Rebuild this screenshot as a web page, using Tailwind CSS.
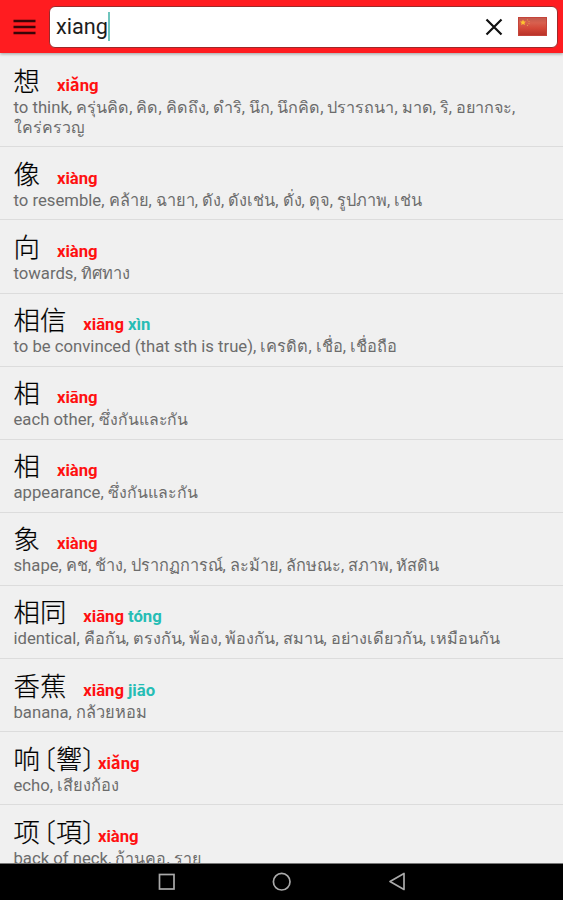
<!DOCTYPE html>
<html lang="en">
<head>
<meta charset="utf-8">
<title>Dictionary</title>
<script src="https://cdn.jsdelivr.net/npm/@tailwindcss/browser@4"></script>
</head>
<body class="bg-black">
<div class="flex h-[900px] w-[563px] flex-col overflow-hidden bg-[#f0f0f0] font-[Roboto,'Noto_Sans_CJK_SC','Noto_Sans',sans-serif]">
  <header class="relative z-10 flex h-[53px] shrink-0 items-center bg-[#ff1c20] pl-[13px] pr-[5px] shadow-[0_1px_3px_rgba(0,0,0,0.35)]">
    <svg class="h-[16px] w-[23px] shrink-0" viewBox="0 0 23 16" stroke="#3a0508" stroke-width="2.4"><path d="M0.5 2H22.500M0.500 8H22.500M0.500 14H22.500"/></svg>
    <div class="ml-[13px] flex h-[42px] flex-1 items-center rounded-[6px] border border-[#9c2a2a] bg-white pl-[6px] pr-[10px]">
      <span class="pt-[1px] text-[21.700px] leading-[30px] text-[#1d1d1d]">xiang</span>
      <span class="h-[29px] w-[2px] bg-[#6fc5bd]"></span>
      <svg class="ml-auto h-[18px] w-[18px]" viewBox="0 0 18 18" stroke="#111" stroke-width="2.200" fill="none"><path d="M1.500 1.500L16.500 16.500M16.500 1.500L1.500 16.500"/></svg>
      <svg class="ml-[15px] h-[19px] w-[29px]" viewBox="0 0 29 19"><defs><linearGradient id="f" x1="0" y1="0" x2="0" y2="1"><stop offset="0" stop-color="#c05a4e"/><stop offset=".3" stop-color="#d8604e"/><stop offset=".6" stop-color="#d44838"/><stop offset="1" stop-color="#b83228"/></linearGradient></defs><rect x=".5" y=".5" width="28" height="18" fill="url(#f)" stroke="#c4443a"/><path d="M5 2.500l.9 1.900 2.100.2-1.600 1.400.5 2.100L5 7 3.100 8.100l.5-2.100L2 4.600l2.100-.2z" fill="#ffc52e"/><g fill="#e49a4a"><circle cx="9.500" cy="2.800" r=".6"/><circle cx="11" cy="4.500" r=".6"/><circle cx="11" cy="6.700" r=".6"/><circle cx="9.500" cy="8.400" r=".6"/></g></svg>
    </div>
  </header>
  <main id="list" class="min-h-0 flex-1 overflow-hidden"></main>
  <nav class="relative h-[37px] shrink-0 border-t border-[#777] bg-black">
    <svg class="h-[36px] w-[563px]" viewBox="0 0 563 36" fill="none" stroke="#aaa" stroke-width="1.700"><rect x="159.500" y="10.500" width="14.500" height="14.500"/><circle cx="281.700" cy="17.700" r="8.300"/><path d="M404 9.500V25.500L390 17.500Z" stroke-linejoin="round"/></svg>
  </nav>
</div>
<script>
// hanzi, traditional form, pinyin, English gloss, Thai gloss, Thai size in px, second line
const rows = [
  ['想', '', ['xiǎng'], 'to think,', 'ครุ่นคิด, คิด, คิดถึง, ดำริ, นึก, นึกคิด, ปรารถนา, มาด, ริ, อยากจะ,', 16.2, 'ใคร่ครวญ'],
  ['像', '', ['xiàng'], 'to resemble,', 'คล้าย, ฉายา, ดัง, ดังเช่น, ดั่ง, ดุจ, รูปภาพ, เช่น', 16.3],
  ['向', '', ['xiàng'], 'towards,', 'ทิศทาง', 16.4],
  ['相信', '', ['xiāng', 'xìn'], 'to be convinced (that sth is true),', 'เครดิต, เชื่อ, เชื่อถือ', 16.4],
  ['相', '', ['xiāng'], 'each other,', 'ซึ่งกันและกัน', 15.8],
  ['相', '', ['xiàng'], 'appearance,', 'ซึ่งกันและกัน', 15.9],
  ['象', '', ['xiàng'], 'shape,', 'คช, ช้าง, ปรากฏการณ์, ละม้าย, ลักษณะ, สภาพ, หัสดิน', 16.3],
  ['相同', '', ['xiāng', 'tóng'], 'identical,', 'คือกัน, ตรงกัน, พ้อง, พ้องกัน, สมาน, อย่างเดียวกัน, เหมือนกัน', 16.18],
  ['香蕉', '', ['xiāng', 'jiāo'], 'banana,', 'กล้วยหอม', 16.4],
  ['响', '響', ['xiǎng'], 'echo,', 'เสียงก้อง', 16.4],
  ['项', '項', ['xiàng'], 'back of neck,', 'ก้านคอ, ราย', 16.1]
];
document.getElementById('list').innerHTML = rows.map(([hanzi, trad, pinyin, en, th, size, more]) => `
  <section class="${more ? 'h-[94.400px] pt-[9.500px]' : 'h-[73.100px] pt-[8.500px]'} border-b border-[#dcdcdc] pl-[13.500px]">
    <div class="flex h-[34px] items-baseline whitespace-nowrap">
      <span class="font-['Noto_Sans_CJK_SC'] text-[26.400px] font-light leading-[34px] text-black [-webkit-text-stroke:0.2px_#000]">${hanzi}</span>
      ${trad ? `<span class="ml-[3px] font-['Noto_Sans_CJK_SC'] text-[26px] font-light leading-[34px] text-black [-webkit-text-stroke:0.2px_#000] [font-feature-settings:'halt']">〔${trad}〕</span>` : ''}
      <span class="${trad ? 'ml-[3px]' : 'ml-[17px]'} text-[16.700px] font-bold text-[#ff1010]">${pinyin[0]}</span>
      ${pinyin[1] ? `<span class="ml-[4px] text-[16.700px] font-bold text-[#26bdb5]">${pinyin[1]}</span>` : ''}
    </div>
    <p class="h-[21px] whitespace-nowrap text-[16.700px] leading-[21px] text-[#6c6c6c]">${en} <span style="font-size:${size}px">${th}</span></p>
    ${more ? `<p class="h-[21px] whitespace-nowrap text-[15.900px] leading-[20px] text-[#6c6c6c]">${more}</p>` : ''}
  </section>`).join('');
</script>
</body>
</html>
